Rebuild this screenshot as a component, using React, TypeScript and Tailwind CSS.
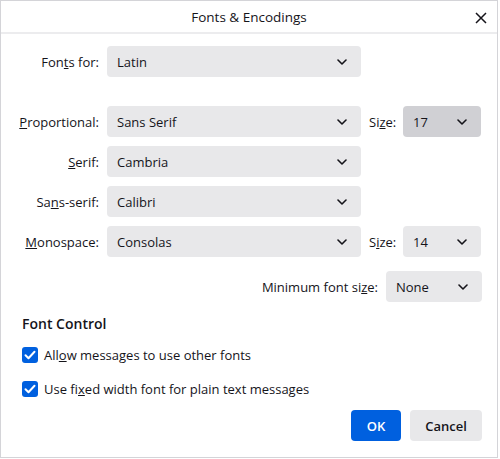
import React from 'react';

const font = { fontFamily: '"Open Sans", "Noto Sans", sans-serif' };

const Chevron = () => (
  <svg width="10" height="6" viewBox="0 0 10 6" className="shrink-0">
    <path d="M1 1l4 4 4-4" fill="none" stroke="#15141a" strokeWidth="1.6" strokeLinecap="round" strokeLinejoin="round" />
  </svg>
);

const Select = ({ value, className = '', dark = false }: { value: string; className?: string; dark?: boolean }) => (
  <div
    className={`h-[31px] rounded-[4px] flex items-center justify-between pl-[10px] pr-[14px] ${dark ? 'bg-[#d0d0d4]' : 'bg-[#e8e8ea]'} ${className}`}
  >
    <span>{value}</span>
    <Chevron />
  </div>
);

const Label = ({ children }: { children: React.ReactNode }) => (
  <div className="w-[92px] text-right shrink-0">{children}</div>
);

const Check = ({ children }: { children: React.ReactNode }) => (
  <div className="flex items-center gap-[6px]">
    <div className="w-[16px] h-[16px] rounded-[3px] bg-[#0060df] flex items-center justify-center">
      <svg width="12" height="10" viewBox="0 0 12 10">
        <path d="M1.5 5.2l3 3 6-6.4" fill="none" stroke="white" strokeWidth="2" strokeLinecap="round" strokeLinejoin="round" />
      </svg>
    </div>
    <span>{children}</span>
  </div>
);

const App = () => {
  return (
    <div className="w-[500px] h-[459px] bg-white text-[#15141a] text-[13px] leading-[20px]" style={font}>
      <div className="w-[498px] h-[458px] border border-[#d4d4d8] flex flex-col">
        {/* Title bar */}
        <div className="h-[33px] border-b-2 border-[#ececee] flex items-center relative shrink-0">
          <div className="flex-1 text-center font-medium text-[13.5px]">Fonts &amp; Encodings</div>
          <svg width="12" height="12" viewBox="0 0 12 12" className="absolute right-[10px] top-[11px]">
            <path d="M1 1l10 10M11 1L1 11" stroke="#15141a" strokeWidth="1.5" />
          </svg>
        </div>

        <div className="flex flex-col pl-[6px] pr-[15px]">
          <div className="flex items-center gap-[8px] mt-[12px]">
            <Label>Fon<u>t</u>s for:</Label>
            <Select value="Latin" className="w-[254px]" />
          </div>

          <div className="flex flex-col gap-[9px] mt-[29px]">
            <div className="flex items-center gap-[8px]">
              <Label><u>P</u>roportional:</Label>
              <Select value="Sans Serif" className="w-[254px]" />
              <span className="w-[27px]">Si<u>z</u>e:</span>
              <Select value="17" dark className="w-[78px] ml-[-1px]" />
            </div>
            <div className="flex items-center gap-[8px]">
              <Label><u>S</u>erif:</Label>
              <Select value="Cambria" className="w-[254px]" />
            </div>
            <div className="flex items-center gap-[8px]">
              <Label>Sa<u>n</u>s-serif:</Label>
              <Select value="Calibri" className="w-[254px]" />
            </div>
            <div className="flex items-center gap-[8px]">
              <Label><u>M</u>onospace:</Label>
              <Select value="Consolas" className="w-[254px]" />
              <span className="w-[27px]">S<u>i</u>ze:</span>
              <Select value="14" className="w-[78px] ml-[-1px]" />
            </div>
          </div>

          <div className="flex items-center justify-end gap-[8px] mt-[14px]">
            <span>Minimum font si<u>z</u>e:</span>
            <Select value="None" className="w-[96px]" />
          </div>

          <div className="pl-[15px] mt-[12px]">
            <div className="font-semibold text-[14px]">Font Control</div>
            <div className="flex flex-col gap-[14px] mt-[11px]">
              <Check>All<u>o</u>w messages to use other fonts</Check>
              <Check>Use fi<u>x</u>ed width font for plain text messages</Check>
            </div>
          </div>

          <div className="flex justify-end gap-[9px] mt-[11px]">
            <button className="w-[50px] h-[31px] rounded-[4px] bg-[#0060df] text-white font-semibold">OK</button>
            <button className="w-[72px] h-[31px] rounded-[4px] bg-[#e8e8ea] font-semibold">Cancel</button>
          </div>
        </div>
      </div>
    </div>
  );
};

export default App;
